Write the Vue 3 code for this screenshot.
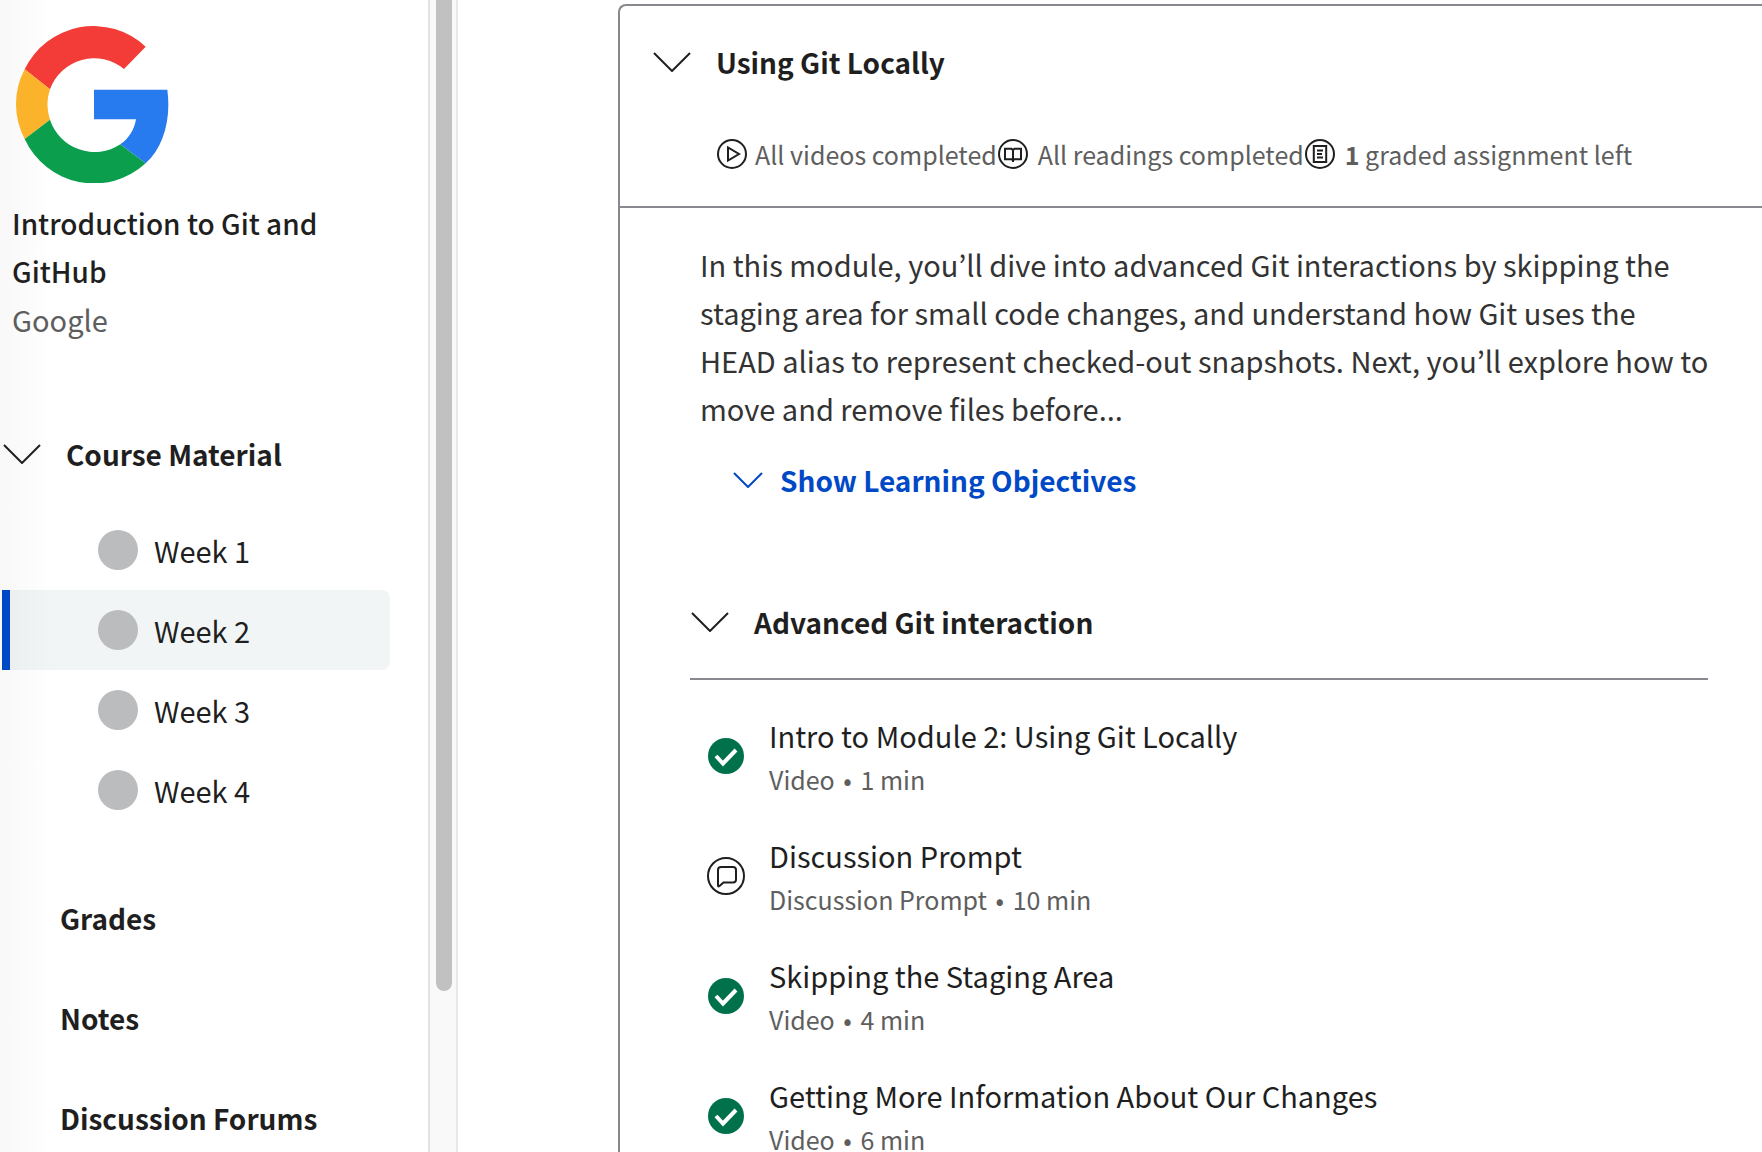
<script setup>
const weeks = [
  { id: 1, label: 'Week 1', current: false },
  { id: 2, label: 'Week 2', current: true },
  { id: 3, label: 'Week 3', current: false },
  { id: 4, label: 'Week 4', current: false },
]

const links = ['Grades', 'Notes', 'Discussion Forums']

const items = [
  { title: 'Intro to Module 2: Using Git Locally', kind: 'Video', time: '1 min', done: true },
  { title: 'Discussion Prompt', kind: 'Discussion Prompt', time: '10 min', done: false },
  { title: 'Skipping the Staging Area', kind: 'Video', time: '4 min', done: true },
  { title: 'Getting More Information About Our Changes', kind: 'Video', time: '6 min', done: true },
]
</script>

<template>
  <div class="page">
    <aside class="sidebar">
      <svg class="logo" viewBox="48 77 459 471" role="img" aria-label="Google logo">
        <path fill="#f33b37" d="M437 139A229 229 0 0 0 74 207L150 267A141 141 0 0 1 372 206Z" />
        <path fill="#fcb32c" d="M74 207A223 223 0 0 0 74 416L150 358A141 141 0 0 1 150 267Z" />
        <path fill="#0b9f4d" d="M74 416A229 229 0 0 0 437 489L361 432A141 141 0 0 1 150 358Z" />
        <path fill="#287aef" d="M437 489C490 440 514 358 502 268H282V357H408C403 388 386 415 361 432Z" />
      </svg>
      <h1 class="course">Introduction to Git and GitHub</h1>
      <p class="provider">Google</p>

      <nav class="nav">
        <button type="button" class="toggle material">
          <svg class="chevron" viewBox="0 0 38 20" aria-hidden="true"><path d="M1 1L19 19L37 1" /></svg>
          <span>Course Material</span>
        </button>
        <ul class="weeks">
          <li v-for="week in weeks" :key="week.id">
            <a href="#" class="week" :class="{ current: week.current }">
              <span class="dot"></span>{{ week.label }}
            </a>
          </li>
        </ul>
        <a v-for="link in links" :key="link" href="#" class="link">{{ link }}</a>
      </nav>
    </aside>

    <div class="track" aria-hidden="true"><div class="thumb"></div></div>

    <main class="main">
      <section class="card">
        <header class="head">
          <button type="button" class="toggle">
            <svg class="chevron" viewBox="0 0 38 20" aria-hidden="true"><path d="M1 1L19 19L37 1" /></svg>
            <span>Using Git Locally</span>
          </button>
          <div class="stats">
            <svg class="ring" viewBox="0 0 30 30" aria-hidden="true">
              <circle cx="15" cy="15" r="14" /><path d="M11 8.5V21.5L22 15Z" />
            </svg>
            <span class="stat first">All videos completed</span>
            <svg class="ring" viewBox="0 0 30 30" aria-hidden="true">
              <circle cx="15" cy="15" r="14" /><path d="M15 11.2L13.6 9.8H7V20.2H13.6L15 21.4L16.4 20.2H23V9.8H16.4ZM15 11V23" />
            </svg>
            <span class="stat">All readings completed</span>
            <svg class="ring" viewBox="0 0 30 30" aria-hidden="true">
              <circle cx="15" cy="15" r="14" /><path d="M8.8 7H21.2V23H8.8ZM12 11.5H18M12 15H17M12 18.500H18" />
            </svg>
            <span class="stat"><b>1</b> graded assignment left</span>
          </div>
        </header>

        <div class="body">
          <p class="summary">In this module, you’ll dive into advanced Git interactions by skipping the staging area for small code changes, and understand how Git uses the HEAD alias to represent checked-out snapshots. Next, you’ll explore how to move and remove files before...</p>
          <button type="button" class="objectives">
            <svg class="chevron small" viewBox="0 0 30 16" aria-hidden="true"><path d="M1 1L15 15L29 1" /></svg>
            <span>Show Learning Objectives</span>
          </button>

          <div class="lesson">
            <button type="button" class="toggle">
              <svg class="chevron" viewBox="0 0 38 20" aria-hidden="true"><path d="M1 1L19 19L37 1" /></svg>
              <span>Advanced Git interaction</span>
            </button>
          </div>

          <ul class="items">
            <li v-for="item in items" :key="item.title">
              <a href="#" class="item">
                <svg v-if="item.done" class="state" viewBox="0 0 38 38" role="img" aria-label="Completed">
                  <circle cx="19" cy="19" r="18" fill="#00714a" />
                  <path d="M9 19L16 26.500L29 13" fill="none" stroke="#fff" stroke-width="4" />
                </svg>
                <svg v-else class="state" viewBox="0 0 38 38" role="img" aria-label="Not completed">
                  <g fill="none" stroke="#1f1f1f" stroke-width="2">
                    <circle cx="19" cy="19" r="18" />
                    <path d="M11 29V13Q11 10 14 10H26Q29 10 29 13V22.500Q29 25.500 26 25.500H16.500L12.500 29Q11 30 11 28.500Z" />
                  </g>
                </svg>
                <span class="text">
                  <span>{{ item.title }}</span>
                  <span class="meta">{{ item.kind }} <span class="bullet">•</span> {{ item.time }}</span>
                </span>
              </a>
            </li>
          </ul>
        </div>
      </section>
    </main>
  </div>
</template>

<style>
body {
  margin: 0;
  background: #fff;
}
</style>

<style scoped>
.page {
  display: flex;
  height: 100vh;
  overflow: hidden;
  font-family: "Noto Sans CJK KR", "Noto Sans", sans-serif;
  font-size: 29px;
  line-height: 48px;
  color: #1f1f1f;
}

button {
  border: 0;
  padding: 0;
  background: none;
  font: inherit;
  color: inherit;
  cursor: pointer;
}

a {
  color: inherit;
  text-decoration: none;
}

ul {
  list-style: none;
  margin: 0;
  padding: 0;
}

.sidebar {
  box-sizing: border-box;
  flex: 0 0 428px;
  padding: 26px 38px 0 2px;
  overflow: hidden;
  background: linear-gradient(to right, #f8f8f8, #fff 54px);
}

.logo {
  display: block;
  width: 153px;
  height: 157px;
  margin-left: 14px;
}

.course {
  margin: 16px 48px 0 10px;
  font-size: 28px;
  font-weight: 500;
}

.provider {
  margin: 0 0 0 10px;
  color: #5e5e5e;
}

.nav {
  display: flex;
  flex-direction: column;
  margin-top: 87px;
}

.toggle {
  display: flex;
  align-items: center;
  gap: 25px;
  padding-left: 1px;
  font-size: 28px;
  font-weight: 700;
}

.material {
  margin-bottom: 32px;
}

.chevron {
  flex: none;
  width: 38px;
  height: 20px;
  fill: none;
  stroke: currentColor;
  stroke-width: 2;
}

.small {
  width: 30px;
  height: 16px;
}

.week {
  display: flex;
  align-items: center;
  gap: 16px;
  height: 80px;
  padding-left: 88px;
  border-left: 8px solid transparent;
}

.current {
  border-left-color: #0049c6;
  border-radius: 0 8px 8px 0;
  background: rgba(0, 55, 75, 0.05);
}

.dot {
  width: 40px;
  height: 40px;
  border-radius: 50%;
  background: #bbbcbe;
}

.weeks {
  margin-bottom: 48px;
}

.link {
  margin: 16px 0 36px 58px;
  font-size: 28px;
  font-weight: 700;
}

.track {
  box-sizing: border-box;
  flex: 0 0 30px;
  padding: 0 4px 0 6px;
  border-left: 2px solid #e3e3e3;
  border-right: 2px solid #e8e8e8;
  background: #f9f9f9;
}

.thumb {
  width: 16px;
  height: 86%;
  border-radius: 0 0 8px 8px;
  background: #c1c1c1;
}

.main {
  flex: 1;
  min-width: 0;
  padding: 4px 0 0 160px;
}

.card {
  border: 2px solid #87898e;
  border-right: 0;
  border-bottom: 0;
  border-radius: 8px 0 0 0;
}

.head {
  padding: 32px 0 28px 32px;
  border-bottom: 2px solid #87898e;
}

.stats {
  display: flex;
  align-items: center;
  margin: 44px 0 0 65px;
  font-size: 25px;
  color: #5e5e5e;
  white-space: nowrap;
}

.ring {
  flex: none;
  width: 30px;
  height: 30px;
  fill: none;
  stroke: #1f1f1f;
  stroke-width: 2;
}

.stat {
  margin: 0 1px 0 10px;
}

.first {
  margin-left: 8px;
}

.body {
  padding: 32px 54px 0 70px;
}

.summary {
  margin: 0 -4px 24px 10px;
  color: #333;
}

.objectives {
  display: flex;
  align-items: center;
  gap: 17px;
  margin-left: 43px;
  font-size: 28px;
  font-weight: 700;
  color: #0049c6;
}

.lesson {
  margin-top: 94px;
  padding-bottom: 32px;
  border-bottom: 2px solid #87898e;
}

.items {
  padding-top: 16px;
}

.item {
  display: flex;
  align-items: center;
  gap: 24px;
  height: 120px;
  padding-left: 17px;
}

.state {
  flex: none;
  width: 38px;
  height: 38px;
}

.text {
  display: flex;
  flex-direction: column;
  padding-bottom: 2px;
}

.meta {
  font-size: 25px;
  line-height: 40px;
  color: #5e5e5e;
}

.bullet {
  margin: 0 3px;
}
</style>
